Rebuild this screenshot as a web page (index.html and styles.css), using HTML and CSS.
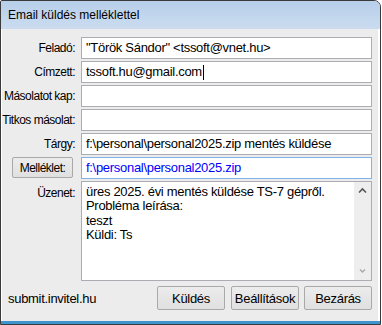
FILE: index.html
```html
<!DOCTYPE html>
<html lang="hu">
<head>
    <meta charset="UTF-8">
    <title>Email küldés melléklettel</title>
    <link rel="stylesheet" href="styles.css">
</head>
<body>
    <div class="window">
        <div class="titlebar">Email küldés melléklettel</div>
        <div class="content">
            <div class="form">
                <div class="label">Feladó:</div>
                <div class="field">"Török Sándor" &lt;tssoft@vnet.hu&gt;</div>

                <div class="label">Címzett:</div>
                <div class="field">tssoft.hu@gmail.com<span class="caret"></span></div>

                <div class="label">Másolatot kap:</div>
                <div class="field"></div>

                <div class="label">Titkos másolat:</div>
                <div class="field"></div>

                <div class="label">Tárgy:</div>
                <div class="field">f:\personal\personal2025.zip mentés küldése</div>

                <div class="label label-btn"><button class="btn btn-attach">Melléklet:</button></div>
                <div class="field field-attach">f:\personal\personal2025.zip</div>

                <div class="label label-top">Üzenet:</div>
                <div class="memo">
                    <div class="memo-text">üres 2025. évi mentés küldése TS-7 gépről.<br>Probléma leírása:<br>teszt<br>Küldi: Ts</div>
                    <div class="scrollbar">
                        <svg class="arrow" width="17" height="12" viewBox="0 0 17 12"><path d="M5 7.5 L8.5 4 L12 7.5" fill="none" stroke="#555" stroke-width="1.6"/></svg>
                        <svg class="arrow" width="17" height="12" viewBox="0 0 17 12"><path d="M6 4.5 L8.5 7 L11 4.5" fill="none" stroke="#a8a8a8" stroke-width="1.4"/></svg>
                    </div>
                </div>
            </div>
            <div class="footer">
                <span class="host">submit.invitel.hu</span>
                <div class="buttons">
                    <button class="btn btn-send">Küldés</button>
                    <button class="btn btn-settings">Beállítások</button>
                    <button class="btn btn-close">Bezárás</button>
                </div>
            </div>
        </div>
    </div>
</body>
</html>
```

FILE: styles.css
```css
body {
    margin: 0;
    background: #fff;
    font-family: "Liberation Sans", Arial, sans-serif;
    color: #000;
}
.window {
    width: 381px;
    height: 325px;
    box-sizing: border-box;
    border: 1px solid #3a3a3a;
    border-radius: 2px 7px 0 0;
    overflow: hidden;
    display: flex;
    flex-direction: column;
    background: #ececec;
}
.titlebar {
    height: 28px;
    flex: none;
    box-sizing: border-box;
    padding: 7px 0 0 7px;
    font-size: 12px;
    background: linear-gradient(#b7cfea, #cbdcf0);
}
.content {
    flex: 1;
    display: flex;
    flex-direction: column;
    box-shadow: inset 1px 0 #fff, inset -2px 0 #fff;
    border-bottom: 3px solid #3f93cf;
}
.form {
    display: grid;
    grid-template-columns: 74px 291px;
    grid-template-rows: repeat(6, 22px) 100px;
    column-gap: 6px;
    row-gap: 2px;
    padding-top: 8px;
}
.label {
    display: flex;
    align-items: center;
    justify-content: flex-end;
    font-size: 12px;
    letter-spacing: -0.5px;
}
.label-btn {
    justify-content: flex-start;
    align-items: flex-start;
}
.label-top {
    align-items: flex-start;
    padding-top: 5px;
}
.field {
    box-sizing: border-box;
    border: 1px solid #abadb3;
    background: #fff;
    padding: 0 4px;
    font-size: 13px;
    letter-spacing: -0.3px;
    line-height: 20px;
    white-space: nowrap;
    display: flex;
    align-items: center;
}
.field-attach {
    border-color: #7eb4ea;
    color: #0000ff;
}
.caret {
    width: 1px;
    height: 15px;
    background: #000;
    margin-left: 1px;
}
.memo {
    box-sizing: border-box;
    border: 1px solid #abadb3;
    background: #fff;
    display: flex;
}
.memo-text {
    flex: 1;
    padding: 3px 4px;
    font-size: 13px;
    letter-spacing: -0.3px;
    line-height: 14.3px;
}
.scrollbar {
    width: 17px;
    background: #eeeeee;
    display: flex;
    flex-direction: column;
    justify-content: space-between;
    padding: 3px 0;
}
.arrow {
    display: block;
}
.btn {
    font-family: "Liberation Sans", Arial, sans-serif;
    font-size: 13px;
    letter-spacing: -0.3px;
    color: #000;
    background: linear-gradient(#ececec, #e0e0e0);
    border: 1px solid #a9a9a9;
    border-radius: 2px;
    padding: 0;
    margin: 0;
}
.btn-attach {
    width: 61px;
    height: 21px;
    margin-left: 11px;
    font-size: 12px;
    letter-spacing: -0.5px;
}
.footer {
    display: flex;
    align-items: center;
    justify-content: space-between;
    margin-top: 5px;
    padding: 0 8px 0 7px;
}
.host {
    font-size: 13px;
    letter-spacing: -0.3px;
}
.buttons {
    display: flex;
    gap: 5px;
}
.buttons .btn {
    width: 68px;
    height: 24px;
}
.btn-send {
    margin-right: 1px;
}
```
